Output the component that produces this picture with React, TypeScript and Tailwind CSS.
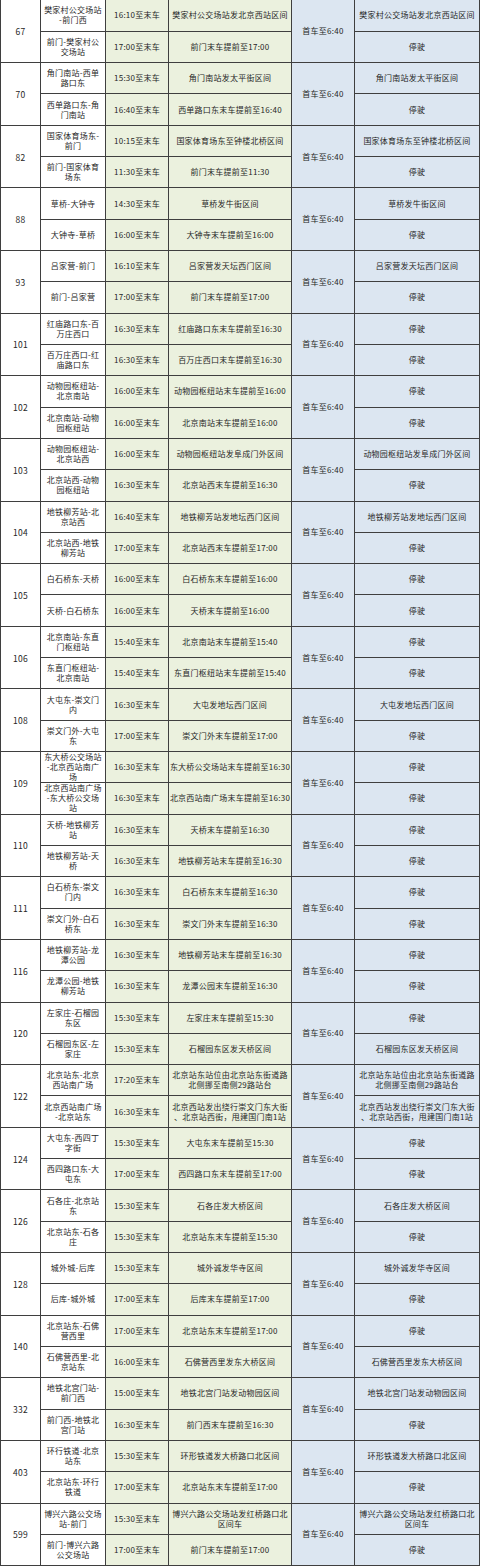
type Row = { dir: string; time: string; desc: string; last: string };
type Group = { no: string; rows: Row[] };

const STOP = "停驶";

const groups: Group[] = [
  {
    no: "67",
    rows: [
      { dir: "樊家村公交场站\n-前门西", time: "16:10至末车", desc: "樊家村公交场站发北京西站区间", last: "樊家村公交场站发北京西站区间" },
      { dir: "前门-樊家村公\n交场站", time: "17:00至末车", desc: "前门末车提前至17:00", last: STOP },
    ],
  },
  {
    no: "70",
    rows: [
      { dir: "角门南站-西单\n路口东", time: "15:30至末车", desc: "角门南站发太平街区间", last: "角门南站发太平街区间" },
      { dir: "西单路口东-角\n门南站", time: "16:40至末车", desc: "西单路口东末车提前至16:40", last: STOP },
    ],
  },
  {
    no: "82",
    rows: [
      { dir: "国家体育场东-\n前门", time: "10:15至末车", desc: "国家体育场东至钟楼北桥区间", last: "国家体育场东至钟楼北桥区间" },
      { dir: "前门-国家体育\n场东", time: "11:30至末车", desc: "前门末车提前至11:30", last: STOP },
    ],
  },
  {
    no: "88",
    rows: [
      { dir: "草桥-大钟寺", time: "14:30至末车", desc: "草桥发牛街区间", last: "草桥发牛街区间" },
      { dir: "大钟寺-草桥", time: "16:00至末车", desc: "大钟寺末车提前至16:00", last: STOP },
    ],
  },
  {
    no: "93",
    rows: [
      { dir: "吕家营-前门", time: "16:10至末车", desc: "吕家营发天坛西门区间", last: "吕家营发天坛西门区间" },
      { dir: "前门-吕家营", time: "17:00至末车", desc: "前门末车提前至17:00", last: STOP },
    ],
  },
  {
    no: "101",
    rows: [
      { dir: "红庙路口东-百\n万庄西口", time: "16:30至末车", desc: "红庙路口东末车提前至16:30", last: STOP },
      { dir: "百万庄西口-红\n庙路口东", time: "16:30至末车", desc: "百万庄西口末车提前至16:30", last: STOP },
    ],
  },
  {
    no: "102",
    rows: [
      { dir: "动物园枢纽站-\n北京南站", time: "16:00至末车", desc: "动物园枢纽站末车提前至16:00", last: STOP },
      { dir: "北京南站-动物\n园枢纽站", time: "16:00至末车", desc: "北京南站末车提前至16:00", last: STOP },
    ],
  },
  {
    no: "103",
    rows: [
      { dir: "动物园枢纽站-\n北京站西", time: "16:00至末车", desc: "动物园枢纽站发阜成门外区间", last: "动物园枢纽站发阜成门外区间" },
      { dir: "北京站西-动物\n园枢纽站", time: "16:30至末车", desc: "北京站西末车提前至16:30", last: STOP },
    ],
  },
  {
    no: "104",
    rows: [
      { dir: "地铁柳芳站-北\n京站西", time: "16:40至末车", desc: "地铁柳芳站发地坛西门区间", last: "地铁柳芳站发地坛西门区间" },
      { dir: "北京站西-地铁\n柳芳站", time: "17:00至末车", desc: "北京站西末车提前至17:00", last: STOP },
    ],
  },
  {
    no: "105",
    rows: [
      { dir: "白石桥东-天桥", time: "16:00至末车", desc: "白石桥东末车提前至16:00", last: STOP },
      { dir: "天桥-白石桥东", time: "16:00至末车", desc: "天桥末车提前至16:00", last: STOP },
    ],
  },
  {
    no: "106",
    rows: [
      { dir: "北京南站-东直\n门枢纽站", time: "15:40至末车", desc: "北京南站末车提前至15:40", last: STOP },
      { dir: "东直门枢纽站-\n北京南站", time: "15:40至末车", desc: "东直门枢纽站末车提前至15:40", last: STOP },
    ],
  },
  {
    no: "108",
    rows: [
      { dir: "大屯东-崇文门\n内", time: "16:30至末车", desc: "大屯发地坛西门区间", last: "大屯发地坛西门区间" },
      { dir: "崇文门外-大屯\n东", time: "17:00至末车", desc: "崇文门外末车提前至17:00", last: STOP },
    ],
  },
  {
    no: "109",
    rows: [
      { dir: "东大桥公交场站\n-北京西站南广\n场", time: "16:30至末车", desc: "东大桥公交场站末车提前至16:30", last: STOP },
      { dir: "北京西站南广场\n-东大桥公交场\n站", time: "16:30至末车", desc: "北京西站南广场末车提前至16:30", last: STOP },
    ],
  },
  {
    no: "110",
    rows: [
      { dir: "天桥-地铁柳芳\n站", time: "16:30至末车", desc: "天桥末车提前至16:30", last: STOP },
      { dir: "地铁柳芳站-天\n桥", time: "16:30至末车", desc: "地铁柳芳站末车提前至16:30", last: STOP },
    ],
  },
  {
    no: "111",
    rows: [
      { dir: "白石桥东-崇文\n门内", time: "16:30至末车", desc: "白石桥东末车提前至16:30", last: STOP },
      { dir: "崇文门外-白石\n桥东", time: "16:30至末车", desc: "崇文门外末车提前至16:30", last: STOP },
    ],
  },
  {
    no: "116",
    rows: [
      { dir: "地铁柳芳站-龙\n潭公园", time: "16:30至末车", desc: "地铁柳芳站末车提前至16:30", last: STOP },
      { dir: "龙潭公园-地铁\n柳芳站", time: "16:30至末车", desc: "龙潭公园末车提前至16:30", last: STOP },
    ],
  },
  {
    no: "120",
    rows: [
      { dir: "左家庄-石榴园\n东区", time: "15:30至末车", desc: "左家庄末车提前至15:30", last: STOP },
      { dir: "石榴园东区-左\n家庄", time: "15:30至末车", desc: "石榴园东区发天桥区间", last: "石榴园东区发天桥区间" },
    ],
  },
  {
    no: "122",
    rows: [
      {
        dir: "北京站东-北京\n西站南广场",
        time: "17:20至末车",
        desc: "北京站东站位由北京站东街道路\n北侧挪至南侧29路站台",
        last: "北京站东站位由北京站东街道路\n北侧挪至南侧29路站台",
      },
      {
        dir: "北京西站南广场\n-北京站东",
        time: "16:30至末车",
        desc: "北京西站发出绕行崇文门东大街\n、北京站西街，甩建国门南1站",
        last: "北京西站发出绕行崇文门东大街\n、北京站西街，甩建国门南1站",
      },
    ],
  },
  {
    no: "124",
    rows: [
      { dir: "大屯东-西四丁\n字街", time: "15:30至末车", desc: "大屯东末车提前至15:30", last: STOP },
      { dir: "西四路口东-大\n屯东", time: "17:00至末车", desc: "西四路口东末车提前至17:00", last: STOP },
    ],
  },
  {
    no: "126",
    rows: [
      { dir: "石各庄-北京站\n东", time: "15:30至末车", desc: "石各庄发大桥区间", last: "石各庄发大桥区间" },
      { dir: "北京站东-石各\n庄", time: "15:30至末车", desc: "北京站东末车提前至15:30", last: STOP },
    ],
  },
  {
    no: "128",
    rows: [
      { dir: "城外城-后库", time: "15:30至末车", desc: "城外诚发华寺区间", last: "城外诚发华寺区间" },
      { dir: "后库-城外城", time: "17:00至末车", desc: "后库末车提前至17:00", last: STOP },
    ],
  },
  {
    no: "140",
    rows: [
      { dir: "北京站东-石佛\n营西里", time: "17:00至末车", desc: "北京站东末车提前至17:00", last: STOP },
      { dir: "石佛营西里-北\n京站东", time: "16:00至末车", desc: "石佛营西里发东大桥区间", last: "石佛营西里发东大桥区间" },
    ],
  },
  {
    no: "332",
    rows: [
      { dir: "地铁北宫门站-\n前门西", time: "15:00至末车", desc: "地铁北宫门站发动物园区间", last: "地铁北宫门站发动物园区间" },
      { dir: "前门西-地铁北\n宫门站", time: "16:30至末车", desc: "前门西末车提前至16:30", last: STOP },
    ],
  },
  {
    no: "403",
    rows: [
      { dir: "环行铁道-北京\n站东", time: "15:30至末车", desc: "环形铁道发大桥路口北区间", last: "环形铁道发大桥路口北区间" },
      { dir: "北京站东-环行\n铁道", time: "17:00至末车", desc: "北京站东末车提前至17:00", last: STOP },
    ],
  },
  {
    no: "599",
    rows: [
      {
        dir: "博兴六路公交场\n站-前门",
        time: "15:30至末车",
        desc: "博兴六路公交场站发红桥路口北\n区间车",
        last: "博兴六路公交场站发红桥路口北\n区间车",
      },
      { dir: "前门-博兴六路\n公交场站", time: "17:00至末车", desc: "前门末车提前至17:00", last: STOP },
    ],
  },
];

// every line break is written out, so cells never wrap on their own
const cell = "border border-[#3f3f3f] px-0 text-center align-middle whitespace-pre";

export default function App() {
  return (
    <div className="w-[480px] bg-white font-['Noto_Sans_CJK_SC',sans-serif] text-[8px] leading-[10px] tracking-[0.25px] text-[#262626]">
      <table className="w-[480px] table-fixed border-collapse">
        <colgroup>
          <col className="w-[40px]" />
          <col className="w-[65px]" />
          <col className="w-[63px]" />
          <col className="w-[123px]" />
          <col className="w-[63px]" />
          <col />
        </colgroup>
        <tbody>
          {groups.map((g, gi) =>
            g.rows.map((r, ri) => {
              const top = gi === 0 && ri === 0 ? " border-t-0" : "";
              return (
                <tr key={g.no + "-" + ri} className="h-[31.32px]">
                  {ri === 0 && (
                    <td rowSpan={2} className={cell + " bg-white text-[8.5px]" + top}>
                      {g.no}
                    </td>
                  )}
                  <td className={cell + " bg-white" + top}>{r.dir}</td>
                  <td className={cell + " bg-[#ebf1de]" + top}>{r.time}</td>
                  <td className={cell + " bg-[#ebf1de]" + top}>{r.desc}</td>
                  {ri === 0 && (
                    <td rowSpan={2} className={cell + " bg-[#dce6f1]" + top}>
                      首车至6:40
                    </td>
                  )}
                  <td className={cell + " bg-[#dce6f1]" + top}>{r.last}</td>
                </tr>
              );
            })
          )}
        </tbody>
      </table>
    </div>
  );
}
